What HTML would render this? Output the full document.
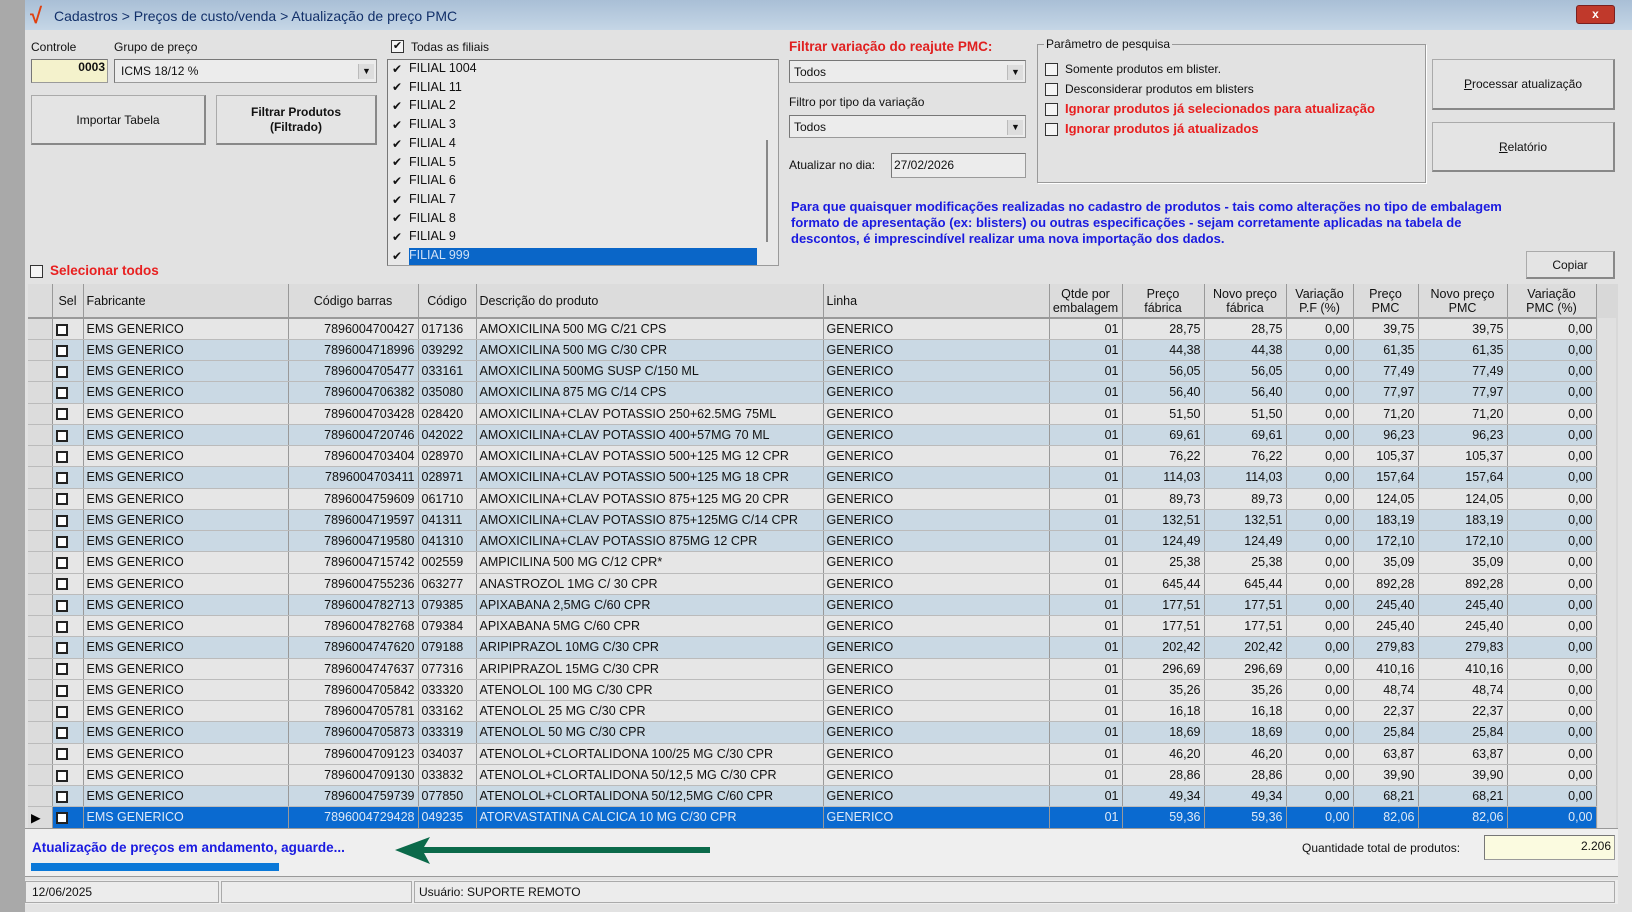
<!DOCTYPE html>
<html><head><meta charset="utf-8"><style>
*{box-sizing:border-box}
body{margin:0;width:1632px;height:912px;overflow:hidden;background:#a9a9a9;font-family:"Liberation Sans",sans-serif;font-size:12px;color:#111;position:relative}
.a{position:absolute}
.win{left:25px;top:0;width:1607px;height:912px;background:#e2e2e2}
.title{left:25px;top:0;width:1607px;height:30px;background:linear-gradient(#a9bfd6,#c5d6e6);}
.lbl{position:absolute;white-space:nowrap}
.box{position:absolute;background:#ececec;border:1px solid #9a9a9a;border-top-color:#777;border-left-color:#777}
.btn{position:absolute;background:#e4e4e4;border:1px solid #aaa;border-right:2px solid #888;border-bottom:2px solid #888;text-align:center;display:flex;align-items:center;justify-content:center}
.cb{position:absolute;width:13px;height:13px;border:1px solid #333;background:#f4f4f4}
.arr{position:absolute;right:2px;top:4px;width:16px;height:15px;background:#ddd;border-left:1px solid #bbb;font-size:9px;text-align:center;line-height:15px}
table{border-collapse:collapse;table-layout:fixed;position:absolute;left:28px;top:284px;width:1568px}
td,th{border-right:1px solid #999;border-bottom:1px solid #bbb;padding:0 3px;white-space:nowrap;overflow:hidden;height:21.25px;font-weight:normal;font-size:12.5px}
th{height:34px;background:#dcdcdc;border-bottom:2px solid #999;line-height:14px}
td.r,th.r{text-align:right}
tr.g td{background:#e6e6e6}
tr.b td{background:#cad9e4}
tr.s td{background:#0a6ad0;color:#dfe9f6}
td.i{background:#dcdcdc!important}
.sq{display:inline-block;width:12px;height:12px;border:2px solid #222;background:#fff;vertical-align:middle}
.fl{position:absolute;left:392px;font-size:12.5px;height:18.7px;line-height:18.7px}
.fl .cb{position:relative;display:inline-block;width:12px;height:12px;border:none;background:none;font-size:12px;line-height:12px;vertical-align:middle;margin-right:5px}
</style></head><body>
<div class="a win"></div>
<div class="a title"></div>
<div class="lbl" style="left:30px;top:3px;color:#e04010;font-size:22px;font-weight:bold">√</div>
<div class="lbl" style="left:54px;top:8px;font-size:14px;color:#12306a">Cadastros &gt; Preços de custo/venda &gt; Atualização de preço PMC</div>
<div class="a" style="left:1576px;top:5px;width:39px;height:19px;background:#c0392b;border:1px solid #7a2020;border-radius:3px;color:#fff;text-align:center;font-weight:bold;line-height:17px">x</div>

<div class="lbl" style="left:31px;top:40px">Controle</div>
<div class="lbl" style="left:114px;top:40px">Grupo de preço</div>
<div class="box" style="left:31px;top:59px;width:77px;height:24px;background:#f4f2cc;text-align:right;font-weight:bold;padding-right:2px;line-height:14px">0003</div>
<div class="box" style="left:114px;top:59px;width:263px;height:24px;padding:4px 6px">ICMS 18/12 %<div class="arr">▼</div></div>
<div class="btn" style="left:31px;top:95px;width:175px;height:50px">Importar Tabela</div>
<div class="btn" style="left:216px;top:95px;width:161px;height:50px;font-weight:bold;line-height:15px">Filtrar Produtos<br>(Filtrado)</div>

<div class="cb" style="left:391px;top:40px;font-size:11px;line-height:11px;text-align:center">✔</div>
<div class="lbl" style="left:411px;top:40px">Todas as filiais</div>
<div class="box" style="left:387px;top:59px;width:392px;height:207px;background:#e8e8e8"></div>
<div class="a" style="left:766px;top:140px;width:2px;height:102px;background:#888"></div>
<div class="a" style="left:409px;top:248px;width:348px;height:17px;background:#0a66c8"></div>
<div class="fl" style="top:59px"><span class="cb">✔</span>FILIAL 1004</div>
<div class="fl" style="top:77.7px"><span class="cb">✔</span>FILIAL 11</div>
<div class="fl" style="top:96.4px"><span class="cb">✔</span>FILIAL 2</div>
<div class="fl" style="top:115.1px"><span class="cb">✔</span>FILIAL 3</div>
<div class="fl" style="top:133.8px"><span class="cb">✔</span>FILIAL 4</div>
<div class="fl" style="top:152.5px"><span class="cb">✔</span>FILIAL 5</div>
<div class="fl" style="top:171.2px"><span class="cb">✔</span>FILIAL 6</div>
<div class="fl" style="top:189.9px"><span class="cb">✔</span>FILIAL 7</div>
<div class="fl" style="top:208.6px"><span class="cb">✔</span>FILIAL 8</div>
<div class="fl" style="top:227.3px"><span class="cb">✔</span>FILIAL 9</div>
<div class="fl" style="top:246px"><span class="cb">✔</span><span style="color:#cfe0f5">FILIAL 999</span></div>

<div class="lbl" style="left:789px;top:39px;color:#e02020;font-weight:bold;font-size:13.5px">Filtrar variação do reajute PMC:</div>
<div class="box" style="left:789px;top:60px;width:237px;height:23px;padding:4px 4px">Todos<div class="arr">▼</div></div>
<div class="lbl" style="left:789px;top:95px">Filtro por tipo da variação</div>
<div class="box" style="left:789px;top:115px;width:237px;height:23px;padding:4px 4px">Todos<div class="arr">▼</div></div>
<div class="lbl" style="left:789px;top:158px">Atualizar no dia:</div>
<div class="box" style="left:891px;top:153px;width:135px;height:25px;padding:4px 2px">27/02/2026</div>

<div class="a" style="left:1037px;top:44px;width:389px;height:139px;border:1px solid #999;box-shadow:1px 1px 0 #fff"></div>
<div class="lbl" style="left:1044px;top:37px;background:#e2e2e2;padding:0 2px">Parâmetro de pesquisa</div>
<div class="cb" style="left:1045px;top:63px"></div><div class="lbl" style="left:1065px;top:62px">Somente produtos em blister.</div>
<div class="cb" style="left:1045px;top:83px"></div><div class="lbl" style="left:1065px;top:82px">Desconsiderar produtos em blisters</div>
<div class="cb" style="left:1045px;top:103px"></div><div class="lbl" style="left:1065px;top:101px;color:#e82020;font-weight:bold;font-size:13px">Ignorar produtos já selecionados para atualização</div>
<div class="cb" style="left:1045px;top:123px"></div><div class="lbl" style="left:1065px;top:121px;color:#e82020;font-weight:bold;font-size:13px">Ignorar produtos já atualizados</div>

<div class="btn" style="left:1432px;top:59px;width:183px;height:51px"><u>P</u>rocessar atualização</div>
<div class="btn" style="left:1432px;top:122px;width:183px;height:50px"><u>R</u>elatório</div>

<div class="lbl" style="left:791px;top:199px;color:#1a1ae0;font-weight:bold;font-size:13px;line-height:16px">Para que quaisquer modificações realizadas no cadastro de produtos - tais como alterações no tipo de embalagem<br>formato de apresentação (ex: blisters) ou outras especificações - sejam corretamente aplicadas na tabela de<br>descontos, é imprescindível realizar uma nova importação dos dados.</div>
<div class="btn" style="left:1526px;top:251px;width:89px;height:28px">Copiar</div>

<div class="cb" style="left:30px;top:265px"></div>
<div class="lbl" style="left:50px;top:263px;color:#e82020;font-weight:bold;font-size:13.5px">Selecionar todos</div>

<div class="a" style="left:28px;top:284px;width:1590px;height:544px;background:#d8d8d8"></div>
<div class="a" style="left:1598px;top:318px;width:18px;height:510px;background:#e0e0e0"></div>
<table>
<colgroup><col style="width:24px"><col style="width:31px"><col style="width:205px"><col style="width:130px"><col style="width:58px"><col style="width:347px"><col style="width:226px"><col style="width:73px"><col style="width:82px"><col style="width:82px"><col style="width:67px"><col style="width:65px"><col style="width:89px"><col style="width:89px"></colgroup>
<tr><th></th><th>Sel</th><th style="text-align:left">Fabricante</th><th>Código barras</th><th>Código</th><th style="text-align:left">Descrição do produto</th><th style="text-align:left">Linha</th><th>Qtde por<br>embalagem</th><th>Preço<br>fábrica</th><th>Novo preço<br>fábrica</th><th>Variação<br>P.F (%)</th><th>Preço<br>PMC</th><th>Novo preço<br>PMC</th><th>Variação<br>PMC (%)</th></tr>
<tr class="g"><td class="i"></td><td><span class="sq"></span></td><td>EMS GENERICO</td><td class="r">7896004700427</td><td>017136</td><td>AMOXICILINA 500 MG C/21 CPS</td><td>GENERICO</td><td class="r">01</td><td class="r">28,75</td><td class="r">28,75</td><td class="r">0,00</td><td class="r">39,75</td><td class="r">39,75</td><td class="r">0,00</td></tr>
<tr class="b"><td class="i"></td><td><span class="sq"></span></td><td>EMS GENERICO</td><td class="r">7896004718996</td><td>039292</td><td>AMOXICILINA 500 MG C/30 CPR</td><td>GENERICO</td><td class="r">01</td><td class="r">44,38</td><td class="r">44,38</td><td class="r">0,00</td><td class="r">61,35</td><td class="r">61,35</td><td class="r">0,00</td></tr>
<tr class="b"><td class="i"></td><td><span class="sq"></span></td><td>EMS GENERICO</td><td class="r">7896004705477</td><td>033161</td><td>AMOXICILINA 500MG SUSP C/150 ML</td><td>GENERICO</td><td class="r">01</td><td class="r">56,05</td><td class="r">56,05</td><td class="r">0,00</td><td class="r">77,49</td><td class="r">77,49</td><td class="r">0,00</td></tr>
<tr class="b"><td class="i"></td><td><span class="sq"></span></td><td>EMS GENERICO</td><td class="r">7896004706382</td><td>035080</td><td>AMOXICILINA 875 MG C/14 CPS</td><td>GENERICO</td><td class="r">01</td><td class="r">56,40</td><td class="r">56,40</td><td class="r">0,00</td><td class="r">77,97</td><td class="r">77,97</td><td class="r">0,00</td></tr>
<tr class="g"><td class="i"></td><td><span class="sq"></span></td><td>EMS GENERICO</td><td class="r">7896004703428</td><td>028420</td><td>AMOXICILINA+CLAV POTASSIO 250+62.5MG 75ML</td><td>GENERICO</td><td class="r">01</td><td class="r">51,50</td><td class="r">51,50</td><td class="r">0,00</td><td class="r">71,20</td><td class="r">71,20</td><td class="r">0,00</td></tr>
<tr class="b"><td class="i"></td><td><span class="sq"></span></td><td>EMS GENERICO</td><td class="r">7896004720746</td><td>042022</td><td>AMOXICILINA+CLAV POTASSIO 400+57MG 70 ML</td><td>GENERICO</td><td class="r">01</td><td class="r">69,61</td><td class="r">69,61</td><td class="r">0,00</td><td class="r">96,23</td><td class="r">96,23</td><td class="r">0,00</td></tr>
<tr class="g"><td class="i"></td><td><span class="sq"></span></td><td>EMS GENERICO</td><td class="r">7896004703404</td><td>028970</td><td>AMOXICILINA+CLAV POTASSIO 500+125 MG 12 CPR</td><td>GENERICO</td><td class="r">01</td><td class="r">76,22</td><td class="r">76,22</td><td class="r">0,00</td><td class="r">105,37</td><td class="r">105,37</td><td class="r">0,00</td></tr>
<tr class="b"><td class="i"></td><td><span class="sq"></span></td><td>EMS GENERICO</td><td class="r">7896004703411</td><td>028971</td><td>AMOXICILINA+CLAV POTASSIO 500+125 MG 18 CPR</td><td>GENERICO</td><td class="r">01</td><td class="r">114,03</td><td class="r">114,03</td><td class="r">0,00</td><td class="r">157,64</td><td class="r">157,64</td><td class="r">0,00</td></tr>
<tr class="g"><td class="i"></td><td><span class="sq"></span></td><td>EMS GENERICO</td><td class="r">7896004759609</td><td>061710</td><td>AMOXICILINA+CLAV POTASSIO 875+125 MG 20 CPR</td><td>GENERICO</td><td class="r">01</td><td class="r">89,73</td><td class="r">89,73</td><td class="r">0,00</td><td class="r">124,05</td><td class="r">124,05</td><td class="r">0,00</td></tr>
<tr class="b"><td class="i"></td><td><span class="sq"></span></td><td>EMS GENERICO</td><td class="r">7896004719597</td><td>041311</td><td>AMOXICILINA+CLAV POTASSIO 875+125MG C/14 CPR</td><td>GENERICO</td><td class="r">01</td><td class="r">132,51</td><td class="r">132,51</td><td class="r">0,00</td><td class="r">183,19</td><td class="r">183,19</td><td class="r">0,00</td></tr>
<tr class="b"><td class="i"></td><td><span class="sq"></span></td><td>EMS GENERICO</td><td class="r">7896004719580</td><td>041310</td><td>AMOXICILINA+CLAV POTASSIO 875MG 12 CPR</td><td>GENERICO</td><td class="r">01</td><td class="r">124,49</td><td class="r">124,49</td><td class="r">0,00</td><td class="r">172,10</td><td class="r">172,10</td><td class="r">0,00</td></tr>
<tr class="g"><td class="i"></td><td><span class="sq"></span></td><td>EMS GENERICO</td><td class="r">7896004715742</td><td>002559</td><td>AMPICILINA 500 MG C/12 CPR*</td><td>GENERICO</td><td class="r">01</td><td class="r">25,38</td><td class="r">25,38</td><td class="r">0,00</td><td class="r">35,09</td><td class="r">35,09</td><td class="r">0,00</td></tr>
<tr class="g"><td class="i"></td><td><span class="sq"></span></td><td>EMS GENERICO</td><td class="r">7896004755236</td><td>063277</td><td>ANASTROZOL 1MG C/ 30 CPR</td><td>GENERICO</td><td class="r">01</td><td class="r">645,44</td><td class="r">645,44</td><td class="r">0,00</td><td class="r">892,28</td><td class="r">892,28</td><td class="r">0,00</td></tr>
<tr class="b"><td class="i"></td><td><span class="sq"></span></td><td>EMS GENERICO</td><td class="r">7896004782713</td><td>079385</td><td>APIXABANA 2,5MG C/60 CPR</td><td>GENERICO</td><td class="r">01</td><td class="r">177,51</td><td class="r">177,51</td><td class="r">0,00</td><td class="r">245,40</td><td class="r">245,40</td><td class="r">0,00</td></tr>
<tr class="g"><td class="i"></td><td><span class="sq"></span></td><td>EMS GENERICO</td><td class="r">7896004782768</td><td>079384</td><td>APIXABANA 5MG C/60 CPR</td><td>GENERICO</td><td class="r">01</td><td class="r">177,51</td><td class="r">177,51</td><td class="r">0,00</td><td class="r">245,40</td><td class="r">245,40</td><td class="r">0,00</td></tr>
<tr class="b"><td class="i"></td><td><span class="sq"></span></td><td>EMS GENERICO</td><td class="r">7896004747620</td><td>079188</td><td>ARIPIPRAZOL 10MG C/30 CPR</td><td>GENERICO</td><td class="r">01</td><td class="r">202,42</td><td class="r">202,42</td><td class="r">0,00</td><td class="r">279,83</td><td class="r">279,83</td><td class="r">0,00</td></tr>
<tr class="g"><td class="i"></td><td><span class="sq"></span></td><td>EMS GENERICO</td><td class="r">7896004747637</td><td>077316</td><td>ARIPIPRAZOL 15MG C/30 CPR</td><td>GENERICO</td><td class="r">01</td><td class="r">296,69</td><td class="r">296,69</td><td class="r">0,00</td><td class="r">410,16</td><td class="r">410,16</td><td class="r">0,00</td></tr>
<tr class="g"><td class="i"></td><td><span class="sq"></span></td><td>EMS GENERICO</td><td class="r">7896004705842</td><td>033320</td><td>ATENOLOL 100 MG C/30 CPR</td><td>GENERICO</td><td class="r">01</td><td class="r">35,26</td><td class="r">35,26</td><td class="r">0,00</td><td class="r">48,74</td><td class="r">48,74</td><td class="r">0,00</td></tr>
<tr class="g"><td class="i"></td><td><span class="sq"></span></td><td>EMS GENERICO</td><td class="r">7896004705781</td><td>033162</td><td>ATENOLOL 25 MG C/30 CPR</td><td>GENERICO</td><td class="r">01</td><td class="r">16,18</td><td class="r">16,18</td><td class="r">0,00</td><td class="r">22,37</td><td class="r">22,37</td><td class="r">0,00</td></tr>
<tr class="b"><td class="i"></td><td><span class="sq"></span></td><td>EMS GENERICO</td><td class="r">7896004705873</td><td>033319</td><td>ATENOLOL 50 MG C/30 CPR</td><td>GENERICO</td><td class="r">01</td><td class="r">18,69</td><td class="r">18,69</td><td class="r">0,00</td><td class="r">25,84</td><td class="r">25,84</td><td class="r">0,00</td></tr>
<tr class="g"><td class="i"></td><td><span class="sq"></span></td><td>EMS GENERICO</td><td class="r">7896004709123</td><td>034037</td><td>ATENOLOL+CLORTALIDONA 100/25 MG C/30 CPR</td><td>GENERICO</td><td class="r">01</td><td class="r">46,20</td><td class="r">46,20</td><td class="r">0,00</td><td class="r">63,87</td><td class="r">63,87</td><td class="r">0,00</td></tr>
<tr class="g"><td class="i"></td><td><span class="sq"></span></td><td>EMS GENERICO</td><td class="r">7896004709130</td><td>033832</td><td>ATENOLOL+CLORTALIDONA 50/12,5 MG C/30 CPR</td><td>GENERICO</td><td class="r">01</td><td class="r">28,86</td><td class="r">28,86</td><td class="r">0,00</td><td class="r">39,90</td><td class="r">39,90</td><td class="r">0,00</td></tr>
<tr class="b"><td class="i"></td><td><span class="sq"></span></td><td>EMS GENERICO</td><td class="r">7896004759739</td><td>077850</td><td>ATENOLOL+CLORTALIDONA 50/12,5MG C/60 CPR</td><td>GENERICO</td><td class="r">01</td><td class="r">49,34</td><td class="r">49,34</td><td class="r">0,00</td><td class="r">68,21</td><td class="r">68,21</td><td class="r">0,00</td></tr>
<tr class="s"><td class="i" style="color:#000">▶</td><td><span class="sq"></span></td><td>EMS GENERICO</td><td class="r">7896004729428</td><td>049235</td><td>ATORVASTATINA CALCICA 10 MG C/30 CPR</td><td>GENERICO</td><td class="r">01</td><td class="r">59,36</td><td class="r">59,36</td><td class="r">0,00</td><td class="r">82,06</td><td class="r">82,06</td><td class="r">0,00</td></tr>
</table>

<div class="a" style="left:25px;top:828px;width:1593px;height:49px;background:#efefef;border-top:1px solid #999;border-bottom:1px solid #999"></div>
<div class="lbl" style="left:32px;top:840px;color:#1a1ae0;font-weight:bold;font-size:13.5px">Atualização de preços em andamento, aguarde...</div>
<div class="a" style="left:31px;top:863px;width:248px;height:8px;background:#0a78d8"></div>
<svg class="a" style="left:390px;top:835px" width="325" height="32"><polygon points="5,15 40,2 34,12 320,12 320,18 34,18 40,29" fill="#0b6a4a"/></svg>
<div class="lbl" style="left:1302px;top:841px">Quantidade total de produtos:</div>
<div class="box" style="left:1484px;top:835px;width:131px;height:25px;background:#fbfbe0;text-align:right;padding:3px 3px">2.206</div>

<div class="a" style="left:25px;top:880px;width:1593px;height:24px;background:#ececec"></div>
<div class="a" style="left:25px;top:881px;width:194px;height:22px;border:1px solid #aaa;padding:3px 6px">12/06/2025</div>
<div class="a" style="left:221px;top:881px;width:191px;height:22px;border:1px solid #aaa"></div>
<div class="a" style="left:414px;top:881px;width:1201px;height:22px;border:1px solid #aaa;padding:3px 4px">Usuário: SUPORTE REMOTO</div>
</body></html>
